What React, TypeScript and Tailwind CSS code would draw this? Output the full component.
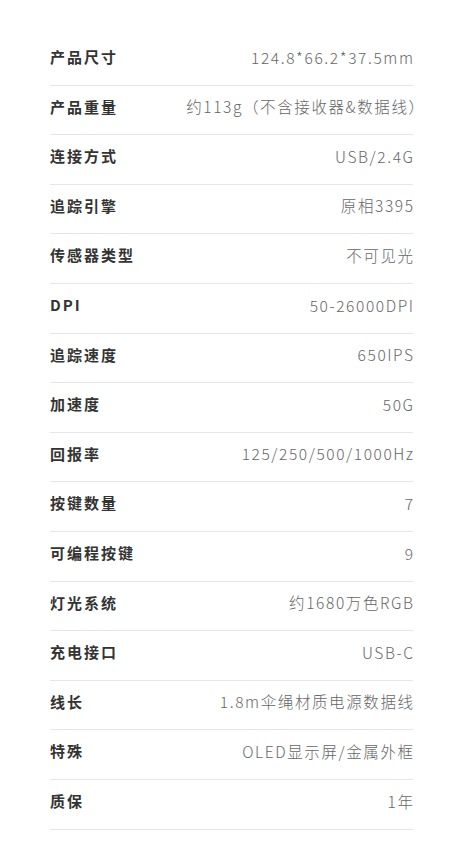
import React from "react";

const rows: [string, React.ReactNode][] = [
  ["产品尺寸", "124.8*66.2*37.5mm"],
  [
    "产品重量",
    <>
      约113g（不含接收器&数据线<span className="-mr-[11px]">）</span>
    </>,
  ],
  ["连接方式", "USB/2.4G"],
  ["追踪引擎", "原相3395"],
  ["传感器类型", "不可见光"],
  ["DPI", "50-26000DPI"],
  ["追踪速度", "650IPS"],
  ["加速度", "50G"],
  ["回报率", "125/250/500/1000Hz"],
  ["按键数量", "7"],
  ["可编程按键", "9"],
  ["灯光系统", "约1680万色RGB"],
  ["充电接口", "USB-C"],
  ["线长", "1.8m伞绳材质电源数据线"],
  ["特殊", "OLED显示屏/金属外框"],
  ["质保", "1年"],
];

export default function App() {
  return (
    <div
      className="w-[460px] h-[846px] bg-white pl-[50px] pr-[47px] pt-[36px]"
      style={{ fontFamily: '"Noto Sans CJK SC", "Noto Sans", sans-serif' }}
    >
      {rows.map(([k, v]) => (
        <div
          key={k}
          className="flex items-center justify-between h-[49.6px] border-b border-[#e6e6e6] pb-[6px]"
        >
          <span className="shrink-0 whitespace-nowrap text-[15px] font-bold text-[#333] tracking-[2px]">{k}</span>
          <span className="shrink-0 whitespace-nowrap text-[15.5px] font-light text-[#666] tracking-[1.6px] -mr-[1.6px]">{v}</span>
        </div>
      ))}
    </div>
  );
}
